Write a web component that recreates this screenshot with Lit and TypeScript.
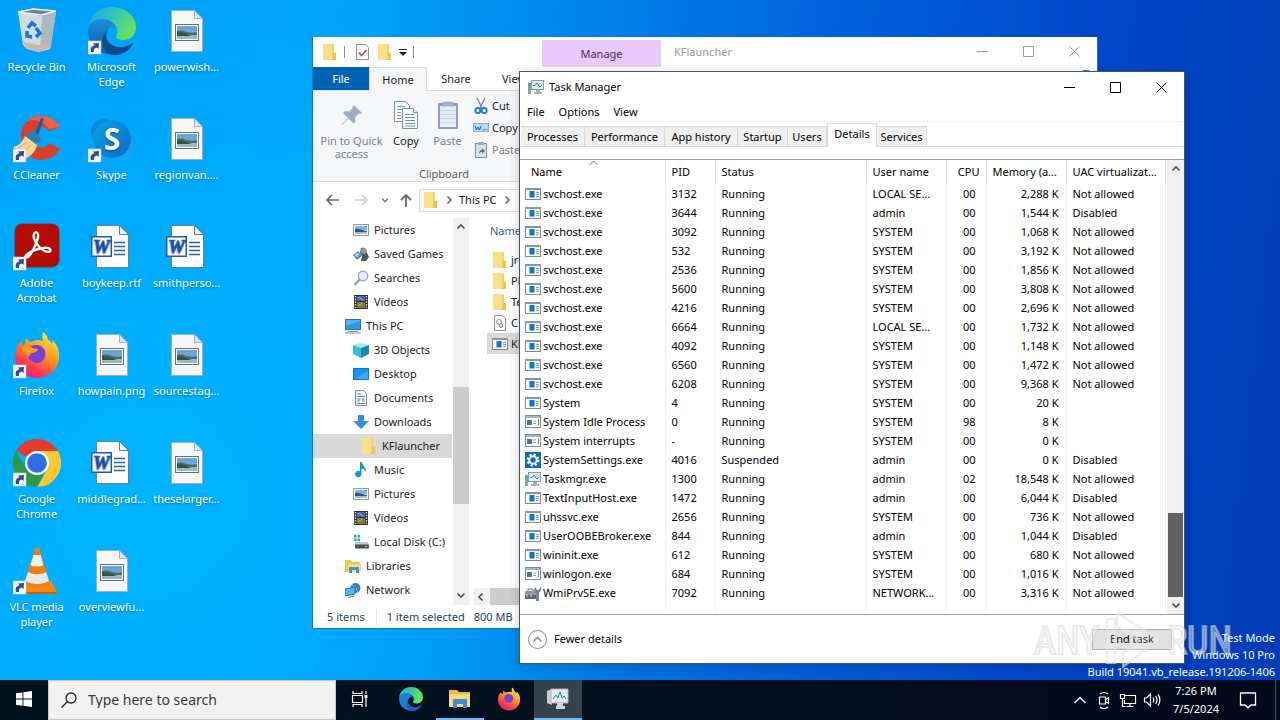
import { LitElement, html, svg, css } from "lit";
import { customElement } from "lit/decorators.js";
import { classMap } from "lit/directives/class-map.js";

/* ---------- large desktop icons ---------- */

const shortcut = svg`<rect x="0" y="34" width="13" height="13" fill="#f4f6fa" stroke="#c4cddb" stroke-width=".6"/>
  <path d="M3 45c-1-4 .5-6 3.500-6.500L5 36.500l6-.500-.500 6-1.800-1.500C6.500 41 5.500 42.500 6 45z" fill="#2b4d8f"/>`;

const icons48: Record<string, unknown> = {
  bin: html`<svg viewBox="0 0 48 48"><path d="M5 5L10 38l4 4 12 3 11-3 6-37-14 4z" fill="#d3dbe2"/><path d="M29 8l14-4-5 36-11 4z" fill="#adb8c1"/><path d="M5 5L28 8 43 4 20 2z" fill="#6f828d" stroke="#eef3f6" stroke-width="1.500"/><path d="M10 34l4 2 12 2 11-3-1 6-10 3-13-3z" fill="#cbb5a8"/><g fill="none" stroke="#1a77cf" stroke-width="3.500"><path d="M15 21l4-5 4 3"/><path d="M23 21l4 5-4 4"/><path d="M19 30l-5-1 0-5"/></g></svg>`,
  edge: html`<svg viewBox="0 0 48 48"><defs><linearGradient id="eg" x1="0" y1="0" x2="1" y2=".4"><stop offset="0" stop-color="#1ba4e0"/><stop offset=".5" stop-color="#2cc3c0"/><stop offset="1" stop-color="#62e35c"/></linearGradient><linearGradient id="eb" x1="0" y1="0" x2="0" y2="1"><stop offset="0" stop-color="#1c8fe0"/><stop offset="1" stop-color="#0c59a4"/></linearGradient></defs><path d="M0 22C1 9 11 0 24 0c14 0 24 10 24 20 0 9-6 13-13 13-5 0-8-2-7-4 3-4 2-12-6-14C14 13 4 14 0 22z" fill="url(#eg)"/><path d="M0 23c1-8 8-12 15-11 7 0 12 5 12 9-1-2-4-2-6 0-6 6-4 20 9 26C14 50 0 39 0 23z" fill="url(#eb)"/><path d="M20 22c-5 9 1 17 11 18 6 1 11-2 13-4 1-1 2 0 1 1C41 45 32 49 24 48 12 44 12 29 20 22z" fill="#114a8b"/>${shortcut}</svg>`,
  ccleaner: html`<svg viewBox="0 0 48 48"><path d="M47 12C42 3 33 0 25 1 13 3 7 12 8 24c0 12 9 21 20 21 8 0 15-4 19-11l-11-6c-3 5-10 6-14 2-5-5-4-14 2-17 4-2 9-1 12 3z" fill="#d9402c"/><path d="M47 12C42 3 33 0 25 1c-5 1-9 3-12 6 8-4 17-2 23 7z" fill="#f0614a"/><path d="M28 3l3 1-7 19-4-2z" fill="#245c8e"/><path d="M17 17c5-1 10 3 11 8l-5 4-11-8z" fill="#2e7cb8"/><path d="M12 21l12 9c-2 7-6 12-12 13L0 32c6-1 9-5 12-11z" fill="#f5d79b"/><path d="M5 33l9-6M9 38l9-8" stroke="#d2a65c"/>${shortcut}</svg>`,
  skype: html`<svg viewBox="0 0 48 48"><defs><linearGradient id="sk" x1="0" y1="0" x2="1" y2="1"><stop offset="0" stop-color="#0aa6ec"/><stop offset="1" stop-color="#0a68c4"/></linearGradient></defs><circle cx="16" cy="17" r="13" fill="#0d86d8"/><circle cx="33" cy="32" r="13" fill="#18a4ea"/><circle cx="24" cy="24" r="19" fill="url(#sk)"/><text x="24" y="35" text-anchor="middle" font-family="Open Sans, sans-serif" font-weight="700" font-size="30" fill="#fff">S</text>${shortcut}</svg>`,
  acrobat: html`<svg viewBox="0 0 48 48"><rect x="2" y="1" width="44" height="43" rx="7" fill="#b30b00" stroke="#8a241c" stroke-width=".8"/><path d="M12 34c3-6 22-12 25-8 2 3-3 4-7 1-5-3-11-12-9-16 1-3 5-2 4 3-1 6-7 18-10 20-2 1-4 1-3 0z" fill="none" stroke="#fff" stroke-width="2.400"/>${shortcut}</svg>`,
  firefox: html`<svg viewBox="0 0 48 48"><defs><linearGradient id="fx" x1=".8" y1="0" x2=".2" y2="1"><stop offset="0" stop-color="#fff04a"/><stop offset=".4" stop-color="#ff9a1f"/><stop offset=".75" stop-color="#ff3a4e"/><stop offset="1" stop-color="#e0108a"/></linearGradient></defs><path d="M30 1c3 2 5 5 5 8 2 0 3 2 4 4 1-1 0-3 0-4 5 4 8 11 7 18-1 12-11 20-23 20C11 46 2 37 2 26c0-7 2-12 6-16l2 5 2-2c1-2 0-4 1-6 2 2 3 4 5 4 4-2 9-2 12-1-1-3-1-6 0-9z" fill="url(#fx)"/><path d="M16 17c4-5 14-4 16 3 2 8-4 13-9 12-8-1-10-9-7-15z" fill="#7a3fd6"/><path d="M8 18c4-3 9-3 12-1l5 1c-1 3-4 4-6 4-2 1-3 2-3 4-3-3-6-4-8-8z" fill="#ff9b22"/>${shortcut}</svg>`,
  chrome: html`<svg viewBox="0 0 48 48"><path d="M24 24L3.200 12A24 24 0 0 1 44.800 12z" fill="#e33b2e"/><path d="M24 12h20.800A24 24 0 0 1 24 48l10.500-18z" fill="#fcc934"/><path d="M3.200 12L13.600 30 24 36h7L24 48A24 24 0 0 1 3.200 12z" fill="#2a9a48"/><circle cx="24" cy="24" r="12" fill="#fff"/><circle cx="24" cy="24" r="9.800" fill="#2f6fe4"/>${shortcut}</svg>`,
  vlc: html`<svg viewBox="0 0 48 48"><path d="M9 34h29l6 11H4z" fill="#f28a12"/><path d="M4 45h40v2H4z" fill="#c7640c"/><path d="M22 1h4l11 36c-6 5-20 5-26 0z" fill="#f27d14"/><path d="M20.500 8h7l3 10c-4 2-9 2-13 0z" fill="#f2f2f2"/><path d="M15 25c5 3 13 3 18 0l3 9c-6 4-18 4-24 0z" fill="#e9e9e9"/>${shortcut}</svg>`,
  image: html`<svg viewBox="0 0 48 48"><path d="M8.500 3.500h23l8 8v33h-31z" fill="#f7f7f7" stroke="#a2adb8"/><path d="M31.500 3.500v8h8z" fill="#d8e8f4" stroke="#9fb3c4"/><rect x="12.500" y="17.500" width="23" height="16" fill="#fff" stroke="#56738c"/><rect x="14" y="19" width="20" height="7" fill="#6fa3dc"/><path d="M14 24c6-2 12 4 20 1v4H14z" fill="#4a6b56"/><rect x="14" y="28" width="20" height="4" fill="#9db7cf"/><path d="M14 25c5 0 11 3 15 4H14z" fill="#2f5540"/></svg>`,
  word: html`<svg viewBox="0 0 48 48"><path d="M8.500 2.500h23l9 9v33h-32z" fill="#fff" stroke="#6b7c93"/><path d="M31.500 2.500v9h9z" fill="#eef3f9" stroke="#6b7c93"/><path d="M26 19.500h11M26 23.500h11M26 27.500h11M26 31.500h11" stroke="#2a5db0" stroke-width="1.500"/><rect x="3" y="13" width="21" height="21" fill="#1e5ab8"/><rect x="4.500" y="14.500" width="18" height="18" fill="#fff"/><text x="13.500" y="30" text-anchor="middle" font-family="Liberation Serif, serif" font-style="italic" font-weight="700" font-size="19" fill="#1e5ab8" stroke="#1e5ab8" stroke-width=".7">W</text></svg>`,
};

/* ---------- small icons ---------- */

const i16: Record<string, unknown> = {
  folder: html`<svg viewBox="0 0 16 16"><path d="M1 0h10l1 1v8h2v7H1z" fill="#f5d06b"/><path d="M1 0h9v13l2 3H1z" fill="#fbe08a"/><path d="M11 9h3v7H9l2-2z" fill="#efc255"/></svg>`,
  pictures: html`<svg viewBox="0 0 16 16"><rect x=".500" y="2.500" width="15" height="11" fill="#fff" stroke="#8f9ca8"/><rect x="2" y="4" width="12" height="4" fill="#7db4e6"/><path d="M2 7c4-1 7 2 12 2v3H2z" fill="#37566a"/><path d="M2 10h12v2H2z" fill="#9fc0da"/></svg>`,
  games: html`<svg viewBox="0 0 16 16"><path d="M8 2c3-1 6 1 6 5l2 4-3 4H8l1-5-2-3z" fill="#4d565e"/><circle cx="11" cy="5" r="3" fill="#8e99a2"/><path d="M0 9l5-4 4 5-5 4z" fill="#4f87b0"/><circle cx="4" cy="9" r="2" fill="#a7d4f4"/></svg>`,
  search: html`<svg viewBox="0 0 16 16"><path d="M6.500 9.500L1.500 15" stroke="#8294a3" stroke-width="2"/><circle cx="10" cy="6" r="4.800" fill="#dbeefb" stroke="#8ba3b5" stroke-width="1.200"/></svg>`,
  videos: html`<svg viewBox="0 0 16 16"><rect x="1" y="1" width="14" height="14" fill="#2d2f33"/><rect x="4" y="2" width="8" height="5" fill="#3d6bc7"/><rect x="4" y="8" width="8" height="6" fill="#8b7a36"/><path d="M5 3l5 3M5 12l4-3" stroke="#d9b646"/><path d="M2.500 2v12M13.500 2v12" stroke="#dcdcdc" stroke-width="1.400" stroke-dasharray="1.500 1.200"/></svg>`,
  pc: html`<svg viewBox="0 0 16 16"><rect x=".500" y="1.500" width="15" height="10" fill="#4cb6f2" stroke="#3d6f96"/><path d="M1 8l14-5v8H1z" fill="#2a9be6"/><path d="M3 13.500h10M0 15h16" stroke="#7e98ab"/></svg>`,
  objects: html`<svg viewBox="0 0 16 16"><path d="M0 3l8-2 8 2-8 3z" fill="#a5e6f2"/><path d="M0 3l8 3v10l-8-4z" fill="#35bdd6"/><path d="M16 3L8 6v10l8-4z" fill="#148aa8"/></svg>`,
  desktop: html`<svg viewBox="0 0 16 16"><rect x=".500" y="2.500" width="15" height="11" fill="#1793ee" stroke="#1272bd"/><path d="M1 13l14-8v8z" fill="#36aaf8"/></svg>`,
  documents: html`<svg viewBox="0 0 16 16"><path d="M2.500.500h8l3 3v12h-11z" fill="#fff" stroke="#7d8c99"/><path d="M4 4h4M4 6.500h8M4 9h3M9 9h3M4 11h3M9 11h3M4 13.500h8" stroke="#3f86c6"/></svg>`,
  downloads: html`<svg viewBox="0 0 16 16"><path d="M5 1h6v6h5l-8 8-8-8h5z" fill="#3a8fdb"/></svg>`,
  music: html`<svg viewBox="0 0 16 16"><path d="M7 0h1.500c1 4 5 5 4.500 10-1-2-2-3-4.500-3.500V12a3.200 3.200 0 1 1-1.500-2.700z" fill="#1196ee"/></svg>`,
  disk: html`<svg viewBox="0 0 16 16"><path d="M1 1h2.500v2.500H1zM4.500 1H7v2.500H4.500zM1 4.500h2.500V7H1zM4.500 4.500H7V7H4.500z" fill="#18a7e0"/><path d="M2 8h13l1 3H2z" fill="#c3c9ce"/><rect x="2" y="10.500" width="14" height="4" rx="1" fill="#4a5156"/><rect x="12" y="12" width="2" height="1" fill="#6dea6d"/></svg>`,
  libraries: html`<svg viewBox="0 0 16 16"><path d="M0 2h6l1 2h8v10H0z" fill="#f5c44e"/><path d="M3 6h13v8H3z" fill="#fbdc83"/><path d="M4 9h10v6h-3v-3H7v3H4z" fill="#3f95d6"/></svg>`,
  network: html`<svg viewBox="0 0 16 16"><circle cx="10.500" cy="6" r="5" fill="#3c7fb6"/><path d="M7 3c3 1 5 4 6 8" stroke="#8ec6ea" fill="none"/><path d="M0 7l10-2v7L0 14z" fill="#56b4ee" stroke="#2f6fa3"/><path d="M3 15.500l6-1.500" stroke="#5c7383"/></svg>`,
  app: html`<svg viewBox="0 0 16 16"><rect x=".500" y="2.500" width="15" height="11" fill="#f8fafc" stroke="#7f8b94"/><path d="M0 3h16" stroke="#8a979f" stroke-width="2"/><rect x="4.500" y="5" width="5" height="6.500" fill="#0f76d0"/><path d="M11 6.500h3M11 8.500h3M11 10.500h3" stroke="#8d9aa5"/></svg>`,
  legacy: html`<svg viewBox="0 0 16 16"><rect x=".500" y="1.500" width="15" height="12" fill="#fff" stroke="#7f8b94"/><path d="M1 3h14" stroke="#a9b5bd" stroke-width="2"/><rect x="2" y="6" width="5" height="5" fill="#3f8272"/><path d="M8 7h3M8 9.500h3" stroke="#8d9aa5"/><path d="M13.500 5v6" stroke="#5a8b7d"/></svg>`,
  gear: html`<svg viewBox="0 0 16 16"><rect width="16" height="16" fill="#0f6cbd"/><circle cx="8" cy="8" r="5.300" fill="none" stroke="#fff" stroke-width="2.400" stroke-dasharray="2.080 2.080"/><circle cx="8" cy="8" r="3.700" fill="none" stroke="#fff" stroke-width="2"/></svg>`,
  taskmgr: html`<svg viewBox="0 0 16 16"><rect x="0" y="4" width="3" height="11" fill="#8fa39b"/><rect x="0" y="4" width="2" height="5" fill="#5fae7c"/><rect x="3.500" y="1.500" width="12" height="9" fill="#d8eefb" stroke="#8b9aa6"/><path d="M5 6.500h2l2-2.500 3 4 2-2" fill="none" stroke="#2c78b8"/><path d="M8 11h4v2h2v2H6v-2h2z" fill="#a8b3bb"/></svg>`,
  wmi: html`<svg viewBox="0 0 16 16"><rect x="0" y="6" width="11" height="4" fill="#8c979f"/><rect x="0" y="10" width="12" height="4" fill="#5b666f"/><path d="M3 6V4h5v2" fill="none" stroke="#69747d"/><path d="M2 9v3M6 9v3" stroke="#d5dce1"/><path d="M10 2l2 3h1l3-3v3l-2 3v8h-3V8L9 5z" fill="#71889f"/></svg>`,
  ini: html`<svg viewBox="0 0 16 16"><path d="M2.500.500h8l3 3v12h-11z" fill="#fff" stroke="#8c969e"/><circle cx="7" cy="7" r="2.500" fill="#eee" stroke="#8f979d"/><circle cx="9" cy="10.500" r="2" fill="#ddd" stroke="#7d868c"/></svg>`,
  check: html`<svg viewBox="0 0 16 16"><path d="M1.500.500h9l3 3v12h-12z" fill="#fff" stroke="#8a8f94"/><path d="M4 8.500l2.500 3 5-5.500" fill="none" stroke="#d34f2f" stroke-width="1.800"/></svg>`,
  cut: html`<svg viewBox="0 0 16 16"><path d="M4 0l5.500 11M12 0L6.500 11" stroke="#7f93a6" stroke-width="1.600"/><circle cx="4.800" cy="12.500" r="2.500" fill="none" stroke="#1d80cc" stroke-width="1.800"/><circle cx="11.200" cy="12.500" r="2.500" fill="none" stroke="#1d80cc" stroke-width="1.800"/></svg>`,
  path: html`<svg viewBox="0 0 16 16"><rect x=".500" y="3.500" width="15" height="8" fill="#b8dbf5" stroke="#7fb2da"/><path d="M2 6l1.500 4L5 7l1.500 3L8 6M9.500 9.500h1M11.500 9.500h1M13.500 9.500h1" fill="none" stroke="#235a8b"/></svg>`,
  pasteLink: html`<svg viewBox="0 0 16 16"><rect x="2.500" y="1.500" width="11" height="14" fill="#dbe2ee" stroke="#7e8ca6"/><rect x="5" y="0" width="6" height="3" fill="#9aa7bd"/><path d="M6 12c0-3 1-4 3-4V6l3 3-3 3v-2c-1 0-2 0-3 2z" fill="#5b6d92"/></svg>`,
};

const pin = html`<svg viewBox="0 0 24 24"><path d="M14 2l8 8-2 1-1-.500-4 4 .500 4-2 2-5-5L2 22l-.500-.500L8 15 3 10l2-2 4 .500 4-4L12.500 4z" fill="#a3aebc"/></svg>`;
const copyIcon = html`<svg viewBox="0 0 26 30"><g fill="#fff" stroke="#7f8fa3"><path d="M1.500 1.500h11l4 4v16h-15z"/><path d="M9.500 8.500h11l4 4v16h-15z"/><path d="M20.500 8.500v4h4"/></g><path d="M4 6.500h8M4 9.500h5M4 12.500h4M4 15.500h4M4 18.500h4M12 14.500h9M12 17.500h10M12 20.500h10M12 23.500h10M12 26h10" stroke="#5d93cf"/></svg>`;
const pasteIcon = html`<svg viewBox="0 0 22 30"><rect x="1" y="3" width="20" height="26" fill="#8f9db8"/><rect x="3" y="6" width="16" height="21" fill="#e8eef8"/><path d="M6 1.500h10v5H6z" fill="#a8b3c8"/><path d="M3 10.500h16M3 14.500h16M3 18.500h16M3 22.500h16" stroke="#c5d1e5"/></svg>`;

const chev = (d: string) => html`<svg viewBox="0 0 10 10"><path d=${d} fill="none" stroke="currentColor" stroke-width="1.600"/></svg>`;
const UP = "M1.500 6.500L5 3l3.500 3.500";
const DOWN = "M1.500 3.500L5 7l3.500-3.500";
const LEFT = "M6.500 1.500L3 5l3.500 3.500";
const RIGHT = "M3.500 1.500L7 5 3.500 8.500";

const windowButtons = html`
  <button class="wb" aria-label="Minimize"><svg viewBox="0 0 11 11"><path d="M0 5.500h11" stroke="currentColor"/></svg></button>
  <button class="wb" aria-label="Maximize"><svg viewBox="0 0 11 11"><path d="M.500.500h10v10H.500z" fill="none" stroke="currentColor"/></svg></button>
  <button class="wb" aria-label="Close"><svg viewBox="0 0 11 11"><path d="M.500.500l10 10M10.500.500l-10 10" stroke="currentColor"/></svg></button>`;

const common = css`
  * { box-sizing: border-box; }
  svg { display: block; width: 100%; height: 100%; }
  button, input, a {
    font: inherit; color: inherit; background: none; border: 0; padding: 0; margin: 0;
    text-decoration: none; white-space: nowrap;
  }
  .i16 { width: 16px; height: 16px; flex: none; }
  .i10 { width: 10px; height: 10px; flex: none; }
  .wb { width: 46px; height: 28px; display: grid; place-items: center; }
  .wb svg { width: 11px; height: 11px; }
`;

/* ---------- file explorer ---------- */

type TreeItem = [icon: string, label: string, depth: number];

const tree: TreeItem[] = [
  ["pictures", "Pictures", 2], ["games", "Saved Games", 2], ["search", "Searches", 2], ["videos", "Videos", 2],
  ["pc", "This PC", 1], ["objects", "3D Objects", 2], ["desktop", "Desktop", 2], ["documents", "Documents", 2],
  ["downloads", "Downloads", 2], ["folder", "KFlauncher", 3], ["music", "Music", 2], ["pictures", "Pictures", 2],
  ["videos", "Videos", 2], ["disk", "Local Disk (C:)", 2], ["libraries", "Libraries", 1], ["network", "Network", 1],
];

const files: [string, string][] = [
  ["folder", "jre"], ["folder", "Pl"], ["folder", "Te"], ["ini", "C"], ["app", "KF"],
];

@customElement("file-explorer")
export class FileExplorer extends LitElement {
  static styles = [common, css`
    :host { display: flex; flex-direction: column; background: #fff; border: 1px solid #1774c4; border-width: 0 1px 1px; color: #1b1b1b; }
    .title { display: flex; height: 30px; color: #999; }
    .quick { flex: none; width: 229px; display: flex; align-items: center; gap: 6px; padding-left: 9px; }
    .bar { width: 1px; height: 12px; background: #8c8c8c; margin: 0 4px 0 0; }
    .drop { width: 8px; height: 8px; }
    .manage { width: 119px; margin-top: 3px; background: #e8c9fb; color: #4a2c5c; display: grid; place-items: center; }
    .name { flex: 1; padding: 0 13px; line-height: 30px; }
    .tabs { display: flex; height: 24px; border-bottom: 1px solid #dadbdc; }
    .tab { width: 58px; }
    .file { width: 56px; background: #0063b1; color: #fff; }
    .home { border: 1px solid #dadbdc; border-bottom: 0; background: #f5f6f7; margin-bottom: -1px; }
    .help { width: 16px; height: 16px; border-radius: 8px; background: #175ea8; margin: 3px 3px 0 auto; }
    .ribbon { height: 91px; background: #f5f6f7; border-bottom: 1px solid #dadbdc; display: flex; }
    .clip { width: 262px; display: flex; flex-direction: column; }
    .tools { display: flex; height: 75px; padding-top: 4px; }
    .big { display: flex; flex-direction: column; align-items: center; line-height: 13px; white-space: normal; }
    .big .pic { height: 39px; display: grid; place-items: center; }
    .w76 { width: 77px; color: #7c8085; }
    .w34 { width: 32px; }
    .w50 { width: 51px; color: #7c8085; }
    .pin { width: 24px; height: 24px; }
    .copy { width: 26px; height: 30px; }
    .paste { width: 22px; height: 30px; }
    .small { display: flex; flex-direction: column; line-height: 22px; }
    .small button { display: flex; align-items: center; gap: 3px; height: 22px; }
    .dim { color: #7c8085; }
    .group { text-align: center; line-height: 15px; color: #5a5d61; }
    .nav { display: flex; align-items: center; height: 36px; color: #6b6b6b; padding-left: 12px; gap: 16px; }
    .arrow { width: 14px; height: 14px; }
    .off { color: #cfcfcf; }
    .recent { width: 8px; height: 8px; margin: 0 -6px 0 -4px; }
    .address { flex: 1; display: flex; align-items: center; gap: 5px; height: 23px; border: 1px solid #d9d9d9; padding-left: 3px; margin: 0 12px 0 -10px; }
    .address .here { color: #111; }
    .body { flex: 1; min-height: 0; display: flex; }
    .tree { width: 139px; margin: 0; padding: 0; list-style: none; overflow: hidden; }
    .node { display: flex; align-items: center; gap: 5px; height: 24px; white-space: nowrap; }
    .d1 { padding-left: 32px; }
    .d2 { padding-left: 40px; }
    .d3 { padding-left: 48px; }
    .sel { background: #d9d9d9; }
    .vscroll { width: 16px; background: #f0f0f0; display: flex; flex-direction: column; align-items: center; color: #505050; padding: 4px 0 5px; margin-left: 1px; }
    .vthumb { width: 16px; height: 117px; background: #cdcdcd; margin: 155px 0 auto; }
    .list { flex: 1; min-width: 0; display: flex; flex-direction: column; padding-left: 5px; }
    .head { line-height: 26px; padding-left: 16px; color: #4c607a; margin-bottom: 5px; }
    .row { display: flex; align-items: center; gap: 3px; height: 21px; padding-left: 5px; margin-left: 13px; }
    .hscroll { margin-top: auto; height: 17px; background: #f0f0f0; display: flex; align-items: center; color: #505050; padding-left: 2px; gap: 4px; }
    .hthumb { width: 300px; height: 17px; background: #cdcdcd; }
    .status { display: flex; align-items: center; height: 23px; padding-left: 14px; gap: 9px; color: #26405c; }
    .status .second { border-left: 1px solid #e3e3e3; padding-left: 10px; margin-left: 2px; }
  `];

  render() {
    return html`
      <div class="title">
        <div class="quick">
          <span class="i16">${i16.folder}</span><span class="bar"></span>
          <span class="i16">${i16.check}</span><span class="i16">${i16.folder}</span>
          <span class="drop"><svg viewBox="0 0 8 8"><path d="M0 1.500h8" stroke="#222"/><path d="M0 4h8L4 8z" fill="#222"/></svg></span>
          <span class="bar"></span>
        </div>
        <div class="manage">Manage</div>
        <div class="name">KFlauncher</div>
        ${windowButtons}
      </div>
      <div class="tabs">
        <button class="tab file">File</button><button class="tab home">Home</button>
        <button class="tab">Share</button><button class="tab">View</button>
        <button class="help" aria-label="Help"></button>
      </div>
      <div class="ribbon">
        <div class="clip">
          <div class="tools">
            <button class="big w76"><span class="pic"><span class="pin">${pin}</span></span>Pin to Quick access</button>
            <button class="big w34"><span class="pic"><span class="copy">${copyIcon}</span></span>Copy</button>
            <button class="big w50"><span class="pic"><span class="paste">${pasteIcon}</span></span>Paste</button>
            <div class="small">
              <button><span class="i16">${i16.cut}</span>Cut</button>
              <button><span class="i16">${i16.path}</span>Copy</button>
              <button class="dim"><span class="i16">${i16.pasteLink}</span>Paste</button>
            </div>
          </div>
          <div class="group">Clipboard</div>
        </div>
      </div>
      <div class="nav">
        <button class="arrow" aria-label="Back"><svg viewBox="0 0 14 14"><path d="M7 2L2 7l5 5M2 7h12" fill="none" stroke="currentColor" stroke-width="1.600"/></svg></button>
        <button class="arrow off" aria-label="Forward"><svg viewBox="0 0 14 14"><path d="M7 2l5 5-5 5M12 7H0" fill="none" stroke="currentColor" stroke-width="1.600"/></svg></button>
        <button class="recent" aria-label="Recent">${chev(DOWN)}</button>
        <button class="arrow" aria-label="Up"><svg viewBox="0 0 14 14"><path d="M2 7l5-5 5 5M7 2v12" fill="none" stroke="currentColor" stroke-width="1.800"/></svg></button>
        <div class="address"><span class="i16">${i16.folder}</span><span class="i10">${chev(RIGHT)}</span><a class="here" href="#">This PC</a><span class="i10">${chev(RIGHT)}</span></div>
      </div>
      <div class="body">
        <ul class="tree">
          ${tree.map(([icon, label, depth]) => html`<li class=${classMap({ node: true, [`d${depth}`]: true, sel: depth === 3 })}><span class="i16">${i16[icon]}</span>${label}</li>`)}
        </ul>
        <div class="vscroll"><span class="i10">${chev(UP)}</span><span class="vthumb"></span><span class="i10">${chev(DOWN)}</span></div>
        <div class="list">
          <div class="head">Name</div>
          ${files.map(([icon, label]) => html`<div class=${classMap({ row: true, sel: icon === "app" })}><span class="i16">${i16[icon]}</span>${label}</div>`)}
          <div class="hscroll"><span class="i10">${chev(LEFT)}</span><span class="hthumb"></span></div>
        </div>
      </div>
      <div class="status"><span>5 items</span><span class="second">1 item selected</span><span>800 MB</span></div>
    `;
  }
}

/* ---------- task manager ---------- */

const NA = "Not allowed";
const DIS = "Disabled";
type Proc = [icon: string, name: string, pid: string, status: string, user: string, cpu: string, mem: string, uac: string];
const svc = (pid: string, user: string, mem: string, uac = NA): Proc => ["app", "svchost.exe", pid, "Running", user, "00", mem, uac];

const processes: Proc[] = [
  svc("3132", "LOCAL SE...", "2,288 K"), svc("3644", "admin", "1,544 K", DIS), svc("3092", "SYSTEM", "1,068 K"),
  svc("532", "SYSTEM", "3,192 K"), svc("2536", "SYSTEM", "1,856 K"), svc("5600", "SYSTEM", "3,808 K"),
  svc("4216", "SYSTEM", "2,696 K"), svc("6664", "LOCAL SE...", "1,732 K"), svc("4092", "SYSTEM", "1,148 K"),
  svc("6560", "SYSTEM", "1,472 K"), svc("6208", "SYSTEM", "9,368 K"),
  ["app", "System", "4", "Running", "SYSTEM", "00", "20 K", ""],
  ["legacy", "System Idle Process", "0", "Running", "SYSTEM", "98", "8 K", ""],
  ["legacy", "System interrupts", "-", "Running", "SYSTEM", "00", "0 K", ""],
  ["gear", "SystemSettings.exe", "4016", "Suspended", "admin", "00", "0 K", DIS],
  ["taskmgr", "Taskmgr.exe", "1300", "Running", "admin", "02", "18,548 K", NA],
  ["app", "TextInputHost.exe", "1472", "Running", "admin", "00", "6,044 K", DIS],
  ["app", "uhssvc.exe", "2656", "Running", "SYSTEM", "00", "736 K", NA],
  ["app", "UserOOBEBroker.exe", "844", "Running", "admin", "00", "1,044 K", DIS],
  ["app", "wininit.exe", "612", "Running", "SYSTEM", "00", "680 K", NA],
  ["legacy", "winlogon.exe", "684", "Running", "SYSTEM", "00", "1,016 K", NA],
  ["wmi", "WmiPrvSE.exe", "7092", "Running", "NETWORK...", "00", "3,316 K", NA],
];

@customElement("task-manager")
export class TaskManager extends LitElement {
  static styles = [common, css`
    :host { display: flex; flex-direction: column; background: #fff; border: 1px solid #4a5560; color: #000; }
    .title { display: flex; align-items: center; height: 30px; padding-left: 8px; }
    .title .name { flex: 1; padding-left: 5px; }
    .menu { display: flex; gap: 14px; height: 20px; padding-left: 7px; border-bottom: 1px solid #f0f0f0; }
    .tabs { display: grid; grid-template-columns: 64px 80px 73px 50px 39px 50px 50px 1fr; align-items: end; height: 25px; padding-left: 1px; border-bottom: 1px solid #d9d9d9; margin-bottom: 12px; }
    .tab { height: 20px; background: #f0f0f0; border: 1px solid #d9d9d9; border-width: 1px 1px 0 0; }
    .on { height: 24px; background: #fff; border-left-width: 1px; margin-bottom: -1px; padding-bottom: 3px; }
    .grid { flex: 1; min-height: 0; display: flex; border: 1px solid #a0a0a0; border-width: 1px 0; }
    .area { flex: 1; min-width: 0; display: flex; flex-direction: column; padding-left: 1px; }
    table { width: 645px; table-layout: fixed; border-collapse: collapse; height: 100%; }
    th, td { font-weight: 400; text-align: left; padding: 0 0 0 6px; height: 19px; line-height: 18px; white-space: nowrap; border-right: 1px solid #f0f0f0; overflow: hidden; }
    th { height: 24px; border-color: #e0e0e0; }
    .first { padding-left: 10px; }
    th.r { text-align: right; padding: 0 6px 0 0; }
    td.r { text-align: right; padding: 0 7px 0 0; }
    td.cpu { padding-right: 10px; }
    .cpu { width: 40px; }
    .c1 { width: 144px; } .c2 { width: 50px; } .c3 { width: 151px; } .c4 { width: 80px; } .c6 { width: 80px; }
    .sort { position: absolute; width: 9px; height: 6px; left: 69px; top: 88px; color: #777; }
    .pname { padding-left: 4px; }
    .cell { display: flex; align-items: center; gap: 2px; height: 18px; }
    .rest td { height: auto; }
    .scroll { width: 17px; background: #f0f0f0; display: flex; flex-direction: column; align-items: center; padding: 4px 0; color: #505050; }
    .thumb { width: 15px; height: 84px; background: #606060; margin: auto 0 3px; }
    .foot { display: flex; align-items: center; justify-content: space-between; height: 48px; padding: 0 12px 0 8px; }
    .fewer { display: flex; align-items: center; gap: 7px; }
    .round { width: 19px; height: 19px; }
    .end { width: 80px; height: 21px; background: #e1e1e1; border: 1px solid #adadad; }
  `];

  render() {
    return html`
      <div class="title"><span class="i16">${i16.taskmgr}</span><span class="name">Task Manager</span>${windowButtons}</div>
      <div class="menu"><button>File</button><button>Options</button><button>View</button></div>
      <div class="tabs" role="tablist">
        ${["Processes", "Performance", "App history", "Startup", "Users", "Details", "Services"].map((t) =>
          html`<button role="tab" class=${classMap({ tab: true, on: t === "Details" })}>${t}</button>`)}
      </div>
      <div class="grid">
        <div class="area">
          <table>
            <thead><tr><th class="c1 first">Name</th><th class="c2">PID</th><th class="c3">Status</th><th class="c4">User name</th><th class="cpu r">CPU</th><th class="c6">Memory (a...</th><th>UAC virtualizat...</th></tr></thead>
            <tbody>
              ${processes.map(([icon, name, pid, status, user, cpu, mem, uac]) => html`<tr>
                <td class="pname"><div class="cell"><span class="i16">${i16[icon]}</span>${name}</div></td>
                <td>${pid}</td><td>${status}</td><td>${user}</td><td class="r cpu">${cpu}</td><td class="r">${mem}</td><td>${uac}</td></tr>`)}
              <tr class="rest"><td></td><td></td><td></td><td></td><td></td><td></td><td></td></tr>
            </tbody>
          </table>
        </div>
        <div class="scroll"><span class="i10">${chev(UP)}</span><span class="thumb"></span><span class="i10">${chev(DOWN)}</span></div>
      </div>
      <span class="sort"><svg viewBox="0 0 9 6"><path d="M.500 5l4-4 4 4" fill="none" stroke="currentColor"/></svg></span>
      <div class="foot">
        <button class="fewer"><span class="round"><svg viewBox="0 0 19 19"><circle cx="9.500" cy="9.500" r="9" fill="#fff" stroke="#8a8a8a"/><path d="M5.500 11.500l4-4 4 4" fill="none" stroke="#8a8a8a" stroke-width="1.500"/></svg></span>Fewer details</button>
        <button class="end">End task</button>
      </div>
    `;
  }
}

/* ---------- desktop and taskbar ---------- */

const shortcuts: [string, string][] = [
  ["bin", "Recycle Bin"], ["ccleaner", "CCleaner"], ["acrobat", "Adobe Acrobat"], ["firefox", "Firefox"], ["chrome", "Google Chrome"], ["vlc", "VLC media player"],
  ["edge", "Microsoft Edge"], ["skype", "Skype"], ["word", "boykeep.rtf"], ["image", "howpain.png"], ["word", "middlegrad..."], ["image", "overviewfu..."],
  ["image", "powerwish..."], ["image", "regionvan...."], ["word", "smithperso..."], ["image", "sourcestag..."], ["image", "theselarger..."],
];

@customElement("app-root")
export class AppRoot extends LitElement {
  static styles = [common, css`
    :host { display: flex; flex-direction: column; height: 100vh; overflow: hidden; font: 11px/16px "Noto Sans", "Open Sans", sans-serif; }
    .desktop { flex: 1; min-height: 0; position: relative; background: radial-gradient(ellipse 520px 520px at 140px 500px, #00b4ff, #00b4ff00), linear-gradient(97deg, #00a0f8 0%, #00a4fa 24%, #0089ee 40%, #0064dc 60%, #0046c8 82%, #003cb4 100%); }
    .icons { display: grid; grid-auto-flow: column; grid-template-rows: repeat(6, 108px); grid-auto-columns: 75px; width: max-content; }
    .item { display: flex; flex-direction: column; align-items: center; padding: 7px 2px 0 0; gap: 4px; line-height: 15px; color: #fff; text-align: center; text-shadow: 0 1px 2px #0006; white-space: normal; }
    .i48 { width: 48px; height: 48px; }
    .explorer { position: absolute; left: 312px; top: 37px; width: 786px; height: 592px; }
    .manager { position: absolute; left: 519px; top: 71px; width: 666px; height: 593px; box-shadow: 0 2px 10px #0003; }
    .build { position: absolute; right: 5px; bottom: 0; text-align: right; color: #fff; line-height: 17px; }
    .mark { position: absolute; right: 48px; bottom: 7px; display: flex; align-items: center; gap: 4px; font: 38px/54px "Roboto Condensed", "Liberation Sans Narrow", "Liberation Sans", sans-serif; color: #ffffff66; -webkit-text-stroke: 2px #d8d8d888; }
    .play { width: 60px; height: 64px; }
    .taskbar { flex: none; height: 40px; display: flex; background: linear-gradient(90deg, #00131d, #020e1c 60%, #030a1c); color: #fff; }
    .tb { width: 48px; display: grid; place-items: center; margin-right: 1px; border-bottom: 2px solid transparent; }
    .start { margin: 0; }
    .view { margin-right: 3px; }
    .win { width: 16px; height: 16px; }
    .searchbox { width: 288px; display: flex; align-items: center; gap: 11px; padding-left: 12px; background: #f2f2f2; border: 1px solid #c8c8c8; color: #222; }
    .searchbox input { flex: 1; min-width: 0; font-size: 14px; outline: 0; }
    .searchbox input::placeholder { color: #3a3a3a; opacity: 1; }
    .i24 { width: 24px; height: 24px; }
    .open { border-color: #76b9ed; }
    .active { background: #34424d; }
    .tray { margin-left: auto; display: flex; align-items: center; gap: 6px; }
    .i18 { width: 18px; height: 18px; }
    .clock { width: 70px; text-align: center; line-height: 18px; margin-left: -6px; }
    .note { margin: 0 12px 0 2px; }
    .peek { width: 5px; height: 40px; border-left: 1px solid #4b5560; }
  `];

  render() {
    return html`
      <main class="desktop">
        <div class="icons">
          ${shortcuts.map(([icon, label]) => html`<a class="item" href="#"><span class="i48">${icons48[icon]}</span>${label}</a>`)}
        </div>
        <file-explorer class="explorer"></file-explorer>
        <task-manager class="manager"></task-manager>
        <div class="mark"><span>ANY</span><span class="play"><svg viewBox="0 0 60 64"><g fill="#ffffff33" stroke="#e2e2e2aa" stroke-width="2"><path d="M14 4L56 30 20 58V44l16-12-22-15z"/><path d="M4 10h8v44H4z"/></g></svg></span><span>RUN</span></div>
        <div class="build">Test Mode<br>Windows 10 Pro<br>Build 19041.vb_release.191206-1406</div>
      </main>
      <footer class="taskbar">
        <button class="tb start" aria-label="Start"><span class="win"><svg viewBox="0 0 16 16"><path d="M0 2.300L6.500 1.400v6.200H0zM7.400 1.200L16 0v7.600H7.400zM0 8.500h6.500v6.200L0 13.800zM7.400 8.500H16V16l-8.600-1.200z" fill="#fff"/></svg></span></button>
        <label class="searchbox"><span class="i16"><svg viewBox="0 0 16 16"><circle cx="10" cy="6" r="5" fill="none" stroke="#222" stroke-width="1.300"/><path d="M6.500 9.500L.500 15.500" stroke="#222" stroke-width="1.300"/></svg></span><input type="text" aria-label="Search" placeholder="Type here to search"></label>
        <button class="tb view" aria-label="Task View"><span class="i18"><svg viewBox="0 0 18 18"><path d="M2 1v2.500h9V1M2 17v-2.500h9V17M1.500 5.500h10v7h-10zM15 1v3M15 8v9" fill="none" stroke="#fff" stroke-width="1.200"/><rect x="13.500" y="5" width="3" height="3" fill="#fff"/></svg></span></button>
        <button class="tb" aria-label="Edge"><span class="i24"><svg viewBox="0 0 48 48"><defs><linearGradient id="tg" x1="0" y1="0" x2="1" y2=".4"><stop offset="0" stop-color="#1ba4e0"/><stop offset="1" stop-color="#62e35c"/></linearGradient></defs><path d="M0 22C1 9 11 0 24 0c14 0 24 10 24 20 0 9-6 13-13 13-5 0-8-2-7-4 3-4 2-12-6-14C14 13 4 14 0 22z" fill="url(#tg)"/><path d="M0 23c1-8 8-12 15-11 7 0 12 5 12 9-1-2-4-2-6 0-6 6-4 20 9 26C14 50 0 39 0 23z" fill="#1a80d4"/><path d="M20 22c-5 9 1 17 11 18 6 1 11-2 13-4 1-1 2 0 1 1C41 45 32 49 24 48 12 44 12 29 20 22z" fill="#1c5fae"/></svg></span></button>
        <button class="tb open" aria-label="File Explorer"><span class="i24"><svg viewBox="0 0 24 24"><path d="M1 3h8l2 2h11v15H1z" fill="#f0b83c"/><path d="M1 7h21v13H1z" fill="#fbd978"/><path d="M5 12h14v9h-4v-4H9v4H5z" fill="#3a8fd2"/></svg></span></button>
        <button class="tb" aria-label="Firefox"><span class="i24"><svg viewBox="0 0 48 48"><defs><linearGradient id="tf" x1=".8" y1="0" x2=".2" y2="1"><stop offset="0" stop-color="#fff04a"/><stop offset=".4" stop-color="#ff9a1f"/><stop offset=".75" stop-color="#ff3a4e"/><stop offset="1" stop-color="#e0108a"/></linearGradient></defs><path d="M30 1c3 2 5 5 5 8 2 0 3 2 4 4 1-1 0-3 0-4 5 4 8 11 7 18-1 12-11 20-23 20C11 46 2 37 2 26c0-7 2-12 6-16l2 5 2-2c1-2 0-4 1-6 2 2 3 4 5 4 4-2 9-2 12-1-1-3-1-6 0-9z" fill="url(#tf)"/><path d="M16 17c4-5 14-4 16 3 2 8-4 13-9 12-8-1-10-9-7-15z" fill="#7a3fd6"/></svg></span></button>
        <button class="tb open active" aria-label="Task Manager"><span class="i24"><svg viewBox="0 0 24 24"><path d="M1 4l5-2v16l-5-2z" fill="#c9ced2"/><path d="M5 2h17v14H5z" fill="#e9eef2" stroke="#a5afb8"/><rect x="7" y="4" width="13" height="10" fill="#dcebf7"/><path d="M7 12l3-4 2 3 2-6 2 6 2-2 2 3" fill="none" stroke="#3678b5"/><path d="M11 16h6v3h2v3h-9v-3h1z" fill="#cfd5da"/></svg></span></button>
        <div class="tray">
          <span class="i18"><svg viewBox="0 0 18 18"><path d="M3.500 12L9 6.500l5.500 5.500" fill="none" stroke="#fff" stroke-width="1.300"/></svg></span>
          <span class="i18"><svg viewBox="0 0 18 18"><path d="M4.500 6h6v7h-6zM10.500 8.500l3-2v6l-3-2M5 3c2-2 6-2 8 0M5 16c2 2 6 2 8 0" fill="none" stroke="#fff" stroke-width="1.200"/></svg></span>
          <span class="i18"><svg viewBox="0 0 18 18"><path d="M6 4.500h10.500v8H5.500V9M11 12.500v3M7.500 15.500h7M1.500 3.500h4v4h-4zM3.500 7.500v8h3" fill="none" stroke="#fff" stroke-width="1.200"/></svg></span>
          <span class="i18"><svg viewBox="0 0 18 18"><path d="M1.500 7h2l4-4v12l-4-4h-2zM10 6.500c1 1.500 1 3.500 0 5M12.500 5c2 2.500 2 5.500 0 8M15 3.500c2.500 3 2.500 8 0 11" fill="none" stroke="#fff" stroke-width="1.200"/></svg></span>
          <time class="clock">7:26 PM<br>7/5/2024</time>
          <span class="i18 note"><svg viewBox="0 0 18 18"><path d="M1.500 2h15v12H12l-3 2.800L6 14H1.500z" fill="none" stroke="#fff" stroke-width="1.300"/></svg></span>
          <span class="peek"></span>
        </div>
      </footer>
    `;
  }
}
